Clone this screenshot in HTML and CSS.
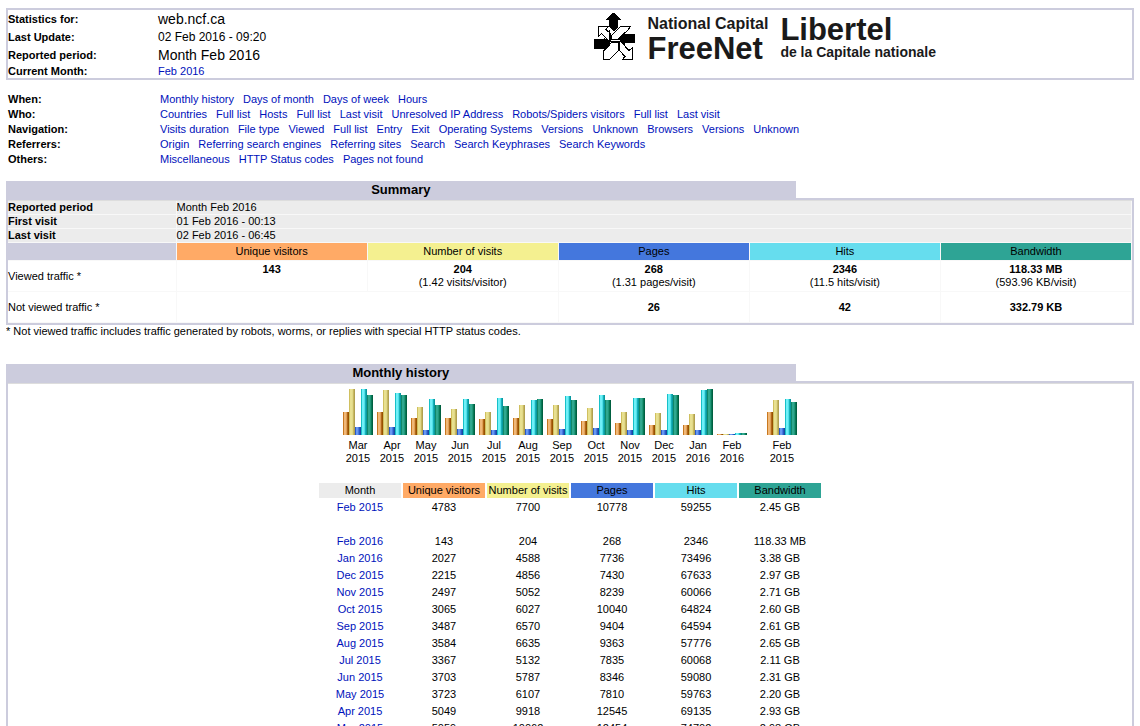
FILE: index.html
```html
<!DOCTYPE html>
<html lang="en">
<head>
<meta charset="utf-8">
<title>Statistics for web.ncf.ca (2016-02)</title>
<link rel="stylesheet" href="styles.css">
</head>
<body>
<header class="top">
    <dl class="info">
        <dt>Statistics for:</dt><dd class="big">web.ncf.ca</dd>
        <dt>Last Update:</dt><dd class="mid">02 Feb 2016 - 09:20</dd>
        <dt>Reported period:</dt><dd class="big">Month Feb 2016</dd>
        <dt>Current Month:</dt><dd><a href="#month">Feb 2016</a></dd>
    </dl>
    <a class="logo" href="#home">
        <svg class="mark" width="42" height="48" viewBox="0 0 42 48" shape-rendering="crispEdges">
            <g fill="#fff" stroke="#000">
                <path d="M4.5 13.5H14.5L12 16.500L16.500 20.500V28.500L15.500 29L7.500 20.500L4.500 23.500z"/>
                <path d="M26.500 13.500H36.500L33.500 17.500L24 26.500H17.500V22.500z"/>
                <path d="M9.500 37.500V46.500H15.500L24.500 37.500V29.500H17.500z"/>
                <path d="M26.500 28.500L35 37.500L38.500 34.500V46.500H28.500L31 43.500L25.500 37.500V28.500z"/>
                <path fill="none" d="M15.500 17V28.500H25.500V37"/>
            </g>
            <g fill="#000">
                <path d="M19 0h1l7 6v1h-3v7l-4 4h-1l-4-4V7h-3V6z"/>
                <path d="M0 26h10v-2l6 7v1l-6 6v-2H0z"/>
                <path d="M41 21v9H31v3l-6-7v-1l6-7v3z"/>
            </g>
        </svg>
        <span class="name en"><span class="small">National Capital</span><span class="large">FreeNet</span></span>
        <span class="name fr"><span class="large">Libertel</span><span class="small">de la Capitale nationale</span></span>
    </a>
</header>

<nav class="menu">
    <b>When:</b>
    <div><a href="#month">Monthly history</a><a href="#daysofmonth">Days of month</a><a href="#daysofweek">Days of week</a><a href="#hours">Hours</a></div>
    <b>Who:</b>
    <div><a href="#countries">Countries</a><a href="#allcountries">Full list</a><a href="#hosts">Hosts</a><a href="#allhosts">Full list</a><a href="#lasthosts">Last visit</a><a href="#unknownip">Unresolved IP Address</a><a href="#robots">Robots/Spiders visitors</a><a href="#allrobots">Full list</a><a href="#lastrobots">Last visit</a></div>
    <b>Navigation:</b>
    <div><a href="#sessions">Visits duration</a><a href="#filetypes">File type</a><a href="#urls">Viewed</a><a href="#urldetail">Full list</a><a href="#urlentry">Entry</a><a href="#urlexit">Exit</a><a href="#os">Operating Systems</a><a href="#osdetail">Versions</a><a href="#unknownos">Unknown</a><a href="#browsers">Browsers</a><a href="#browserdetail">Versions</a><a href="#unknownbrowser">Unknown</a></div>
    <b>Referrers:</b>
    <div><a href="#referer">Origin</a><a href="#refererse">Referring search engines</a><a href="#refererpages">Referring sites</a><a href="#keys">Search</a><a href="#keyphrases">Search Keyphrases</a><a href="#keywords">Search Keywords</a></div>
    <b>Others:</b>
    <div><a href="#misc">Miscellaneous</a><a href="#errors">HTTP Status codes</a><a href="#errors404">Pages not found</a></div>
</nav>

<section class="block">
    <h2>Summary</h2>
    <div class="frame">
        <table class="summary">
            <colgroup><col class="first"><col span="5"></colgroup>
            <tr class="period"><th>Reported period</th><td colspan="5">Month Feb 2016</td></tr>
            <tr class="period"><th>First visit</th><td colspan="5">01 Feb 2016 - 00:13</td></tr>
            <tr class="period"><th>Last visit</th><td colspan="5">02 Feb 2016 - 06:45</td></tr>
            <tr class="heads"><td class="blank"></td><th class="u">Unique visitors</th><th class="v">Number of visits</th><th class="p">Pages</th><th class="h">Hits</th><th class="k">Bandwidth</th></tr>
            <tr class="traffic"><td>Viewed traffic *</td><td><b>143</b><br>&nbsp;</td><td><b>204</b><br>(1.42 visits/visitor)</td><td><b>268</b><br>(1.31 pages/visit)</td><td><b>2346</b><br>(11.5 hits/visit)</td><td><b>118.33 MB</b><br>(593.96 KB/visit)</td></tr>
            <tr class="traffic"><td>Not viewed traffic *</td><td colspan="2"></td><td><b>26</b></td><td><b>42</b></td><td><b>332.79 KB</b></td></tr>
        </table>
    </div>
    <p class="note">* Not viewed traffic includes traffic generated by robots, worms, or replies with special HTTP status codes.</p>
</section>

<section class="block" id="month">
    <h2>Monthly history</h2>
    <div class="frame history">
        <div class="chart" id="chart"></div>
        <table class="months">
            <thead>
                <tr><th class="m">Month</th><th class="u">Unique visitors</th><th class="v">Number of visits</th><th class="p">Pages</th><th class="h">Hits</th><th class="k">Bandwidth</th></tr>
            </thead>
            <tbody>
                <tr><td><a href="#201502">Feb 2015</a></td><td>4783</td><td>7700</td><td>10778</td><td>59255</td><td>2.45 GB</td></tr>
                <tr><td colspan="6">&nbsp;</td></tr>
                <tr><td><a href="#201602">Feb 2016</a></td><td>143</td><td>204</td><td>268</td><td>2346</td><td>118.33 MB</td></tr>
                <tr><td><a href="#201601">Jan 2016</a></td><td>2027</td><td>4588</td><td>7736</td><td>73496</td><td>3.38 GB</td></tr>
                <tr><td><a href="#201512">Dec 2015</a></td><td>2215</td><td>4856</td><td>7430</td><td>67633</td><td>2.97 GB</td></tr>
                <tr><td><a href="#201511">Nov 2015</a></td><td>2497</td><td>5052</td><td>8239</td><td>60066</td><td>2.71 GB</td></tr>
                <tr><td><a href="#201510">Oct 2015</a></td><td>3065</td><td>6027</td><td>10040</td><td>64824</td><td>2.60 GB</td></tr>
                <tr><td><a href="#201509">Sep 2015</a></td><td>3487</td><td>6570</td><td>9404</td><td>64594</td><td>2.61 GB</td></tr>
                <tr><td><a href="#201508">Aug 2015</a></td><td>3584</td><td>6635</td><td>9363</td><td>57776</td><td>2.65 GB</td></tr>
                <tr><td><a href="#201507">Jul 2015</a></td><td>3367</td><td>5132</td><td>7835</td><td>60068</td><td>2.11 GB</td></tr>
                <tr><td><a href="#201506">Jun 2015</a></td><td>3703</td><td>5787</td><td>8346</td><td>59080</td><td>2.31 GB</td></tr>
                <tr><td><a href="#201505">May 2015</a></td><td>3723</td><td>6107</td><td>7810</td><td>59763</td><td>2.20 GB</td></tr>
                <tr><td><a href="#201504">Apr 2015</a></td><td>5049</td><td>9918</td><td>12545</td><td>69135</td><td>2.93 GB</td></tr>
                <tr><td><a href="#201503">Mar 2015</a></td><td>5059</td><td>10062</td><td>12454</td><td>74702</td><td>2.98 GB</td></tr>
            </tbody>
        </table>
    </div>
</section>
<script src="chart.js"></script>
</body>
</html>
```

FILE: styles.css
```css
* {
    box-sizing: border-box;
}

body {
    margin: 8px 6px;
    background: #fff;
    color: #000;
    font: 11px/13px "Liberation Sans", Arial, sans-serif;
}

a {
    color: #0011bb;
    text-decoration: none;
}

a:hover {
    text-decoration: underline;
}

/* header */
.top {
    display: flex;
    border: 2px solid #ccccdd;
}

.info {
    display: grid;
    grid-template-columns: 150px 1fr;
    grid-template-rows: 18px 18px 18px 14px;
    align-items: center;
    flex: 0 0 52%;
    margin: 0;
}

.info dt {
    font-weight: bold;
}

.info dd {
    margin: 0;
}

.info .big {
    font-size: 14px;
    line-height: 16px;
}

.info .mid {
    font-size: 12px;
}

.logo {
    display: flex;
    align-items: flex-start;
    padding-top: 3px;
    color: #1a1a1a;
    white-space: nowrap;
}

.logo:hover {
    text-decoration: none;
}

.mark {
    margin: 0 11px 0 2px;
}

.name {
    display: flex;
    flex-direction: column;
    font-weight: bold;
}

.name .large {
    font-size: 31px;
    line-height: 27px;
}

.name .small {
    font-size: 14px;
    line-height: 18px;
}

.en {
    margin-right: 12px;
}

.en .small {
    font-size: 16px;
    line-height: 22px;
}

.fr {
    padding-top: 3px;
}

/* menu */
.menu {
    display: grid;
    grid-template-columns: 152px 1fr;
    line-height: 15px;
    margin: 12px 2px 14px;
}

.menu div {
    display: flex;
    flex-wrap: wrap;
    column-gap: 9px;
}

/* titled blocks */
.block h2 {
    width: 70%;
    margin: 0;
    background: #ccccdd;
    font-size: 13px;
    line-height: 17px;
    text-align: center;
}

.frame {
    border: 2px solid #ccccdd;
}

.note {
    margin: 0 0 26px;
}

.u { background: #ffaa66; }
.v { background: #f4f090; }
.p { background: #4477dd; }
.h { background: #66ddee; }
.k { background: #2ea495; }
.m { background: #ececec; }

table {
    border-spacing: 0;
}

th {
    font-weight: normal;
}

/* summary */
.summary {
    width: 100%;
    table-layout: fixed;
    border-top: 1px solid #dddddd;
}

.summary col {
    width: 17%;
}

.summary .first {
    width: 15%;
}

.summary th,
.summary td {
    padding: 0;
    border: solid #f8f8f8;
    border-width: 0 1px 1px 0;
    text-align: center;
}

.summary th:first-child,
.summary td:first-child,
.summary .period td {
    text-align: left;
}

.period th,
.period td {
    height: 14px;
    background: #ececec;
}

.period th {
    font-weight: bold;
}

.heads th {
    height: 18px;
}

.heads .blank {
    background: #ccccdd;
}

.traffic td {
    height: 31px;
}

/* monthly history */
.history {
    display: flex;
    flex-direction: column;
    align-items: center;
    padding-top: 3px;
    box-shadow: inset 0 1px #dddddd;
}

.chart {
    display: flex;
    gap: 4px;
}

.group {
    width: 30px;
    text-align: center;
}

.group.last {
    margin-left: 16px;
}

.bars {
    display: flex;
    align-items: flex-end;
    height: 49px;
    margin-bottom: 4px;
}

.bar {
    width: 6px;
}

.bar-u { background: linear-gradient(90deg, #c87820 1px, #f0b878 1px 3px, #e0a058 3px 4px, #b06818 4px 5px, #985000 5px); }
.bar-v { background: linear-gradient(90deg, #d0c060 1px, #e8e090 1px 3px, #e0d888 3px 4px, #c8b860 4px 5px, #b0a050 5px); }
.bar-p { background: linear-gradient(90deg, #2858c8 1px, #6898f0 1px 3px, #4878e0 3px 4px, #2858c0 4px 5px, #1848a0 5px); }
.bar-h { background: linear-gradient(90deg, #18c0c8 1px, #70f0f8 1px 3px, #50e0e8 3px 4px, #18b0b8 4px 5px, #0898a0 5px); }
.bar-k { background: linear-gradient(90deg, #108868 1px, #30a890 1px 3px, #209878 3px 4px, #087858 4px 5px, #006040 5px); }

.months {
    margin-top: 16px;
    border-spacing: 2px;
}

.months th,
.months td {
    width: 82px;
    height: 15px;
    padding: 0;
    text-align: center;
    white-space: nowrap;
}
```

FILE: chart.js
```js
// bar heights in px: visitors, visits, pages, hits, bandwidth
const months = [
    ['Mar', 2015, [23, 46, 8, 46, 40]],
    ['Apr', 2015, [23, 45, 8, 42, 40]],
    ['May', 2015, [17, 28, 5, 36, 30]],
    ['Jun', 2015, [17, 26, 6, 36, 31]],
    ['Jul', 2015, [16, 23, 5, 37, 29]],
    ['Aug', 2015, [17, 30, 6, 35, 36]],
    ['Sep', 2015, [16, 30, 6, 39, 35]],
    ['Oct', 2015, [14, 27, 7, 40, 35]],
    ['Nov', 2015, [12, 23, 5, 37, 37]],
    ['Dec', 2015, [10, 22, 5, 41, 40]],
    ['Jan', 2016, [10, 21, 5, 45, 46]],
    ['Feb', 2016, [1, 1, 1, 2, 2]],
    ['Feb', 2015, [23, 35, 7, 36, 33]]
];
const kinds = ['u', 'v', 'p', 'h', 'k'];

document.getElementById('chart').innerHTML = months.map(([name, year, values], i) => {
    const bars = values.map((v, k) => `<div class="bar bar-${kinds[k]}" style="height: ${v}px"></div>`).join('');
    const last = i === months.length - 1 ? ' last' : '';
    return `<div class="group${last}"><div class="bars">${bars}</div>${name}<br>${year}</div>`;
}).join('');
```
